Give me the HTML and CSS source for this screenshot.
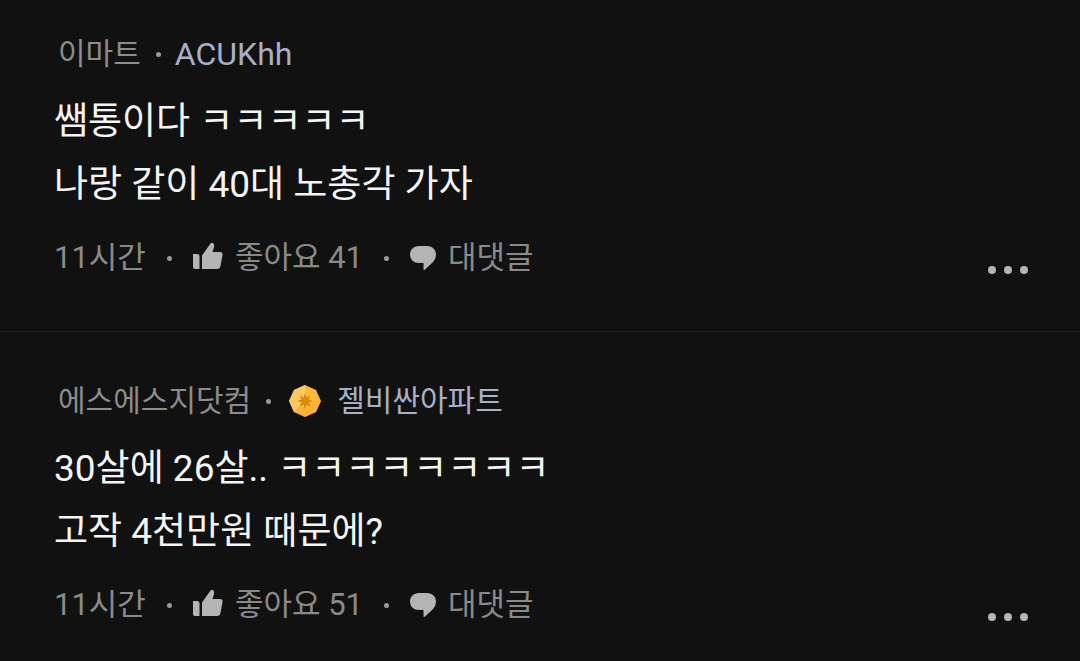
FILE: index.html
```html
<!DOCTYPE html>
<html lang="ko">
<head>
    <meta charset="UTF-8">
    <meta name="viewport" content="width=device-width, initial-scale=1.0">
    <title>댓글</title>
    <link rel="stylesheet" href="styles.css">
</head>
<body>
    <svg class="sprite" aria-hidden="true">
        <symbol id="icon-like" viewBox="0 0 30 28">
            <path d="M0 12h4q2.500 0 2.500 2.500V27H2q-2 0-2-2zM9 13.500 17.500 1.500Q19 0 20.500 1.500 21.500 3 21 5l-1.500 5H27q3 0 2.500 3l-2 11q-.5 3-3.500 3H9z"/>
        </symbol>
        <symbol id="icon-reply" viewBox="0 0 26 26">
            <path d="M9 1h8c5 0 9 3.500 9 8.500 0 4-2 7-5 9.500l-6 5.500q-1.500 1-1.500-.5V18H9c-5 0-9-3.500-9-8.500S4 1 9 1z"/>
        </symbol>
        <symbol id="icon-more" viewBox="0 0 40 8">
            <circle cx="4" cy="4" r="4"/>
            <circle cx="20" cy="4" r="4"/>
            <circle cx="36" cy="4" r="4"/>
        </symbol>
    </svg>
    <main class="comments">
        <article class="comment">
            <header class="comment-header">
                <a class="company" href="#">이마트</a>
                <span class="dot"></span>
                <a class="author latin" href="#">ACUKhh</a>
            </header>
            <p class="comment-body">쌤통이다 ㅋㅋㅋㅋㅋ<br>나랑 같이 40대 노총각 가자</p>
            <footer class="comment-footer">
                <div class="meta">
                    <span class="time">11시간</span>
                    <span class="dot"></span>
                    <button class="action like" type="button"><svg class="icon-like"><use href="#icon-like"/></svg>좋아요 41</button>
                    <span class="dot"></span>
                    <button class="action reply" type="button"><svg class="icon-reply"><use href="#icon-reply"/></svg>대댓글</button>
                </div>
                <button class="more" type="button" aria-label="더보기"><svg class="icon-more"><use href="#icon-more"/></svg></button>
            </footer>
        </article>
        <article class="comment">
            <header class="comment-header">
                <a class="company" href="#">에스에스지닷컴</a>
                <span class="dot"></span>
                <svg class="badge" viewBox="0 0 32 32" aria-hidden="true">
                    <path fill="#fbb83f" d="M16 0 27 5 32 16 27 27 16 32 5 27 0 16 5 5z"/>
                    <path fill="#fdc861" d="M16 0V16L5 27 0 16 5 5z"/>
                    <path fill="#f4a93a" d="M16 16 32 16 27 27 16 32 5 27z" opacity=".5"/>
                    <path fill="#d98a0c" d="M16 8l1.500 4.500 4-2-2 4L24 16l-4.500 1.500 2 4-4-2L16 24l-1.500-4.500-4 2 2-4L8 16l4.500-1.500-2-4 4 2z"/>
                </svg>
                <a class="author" href="#">젤비싼아파트</a>
            </header>
            <p class="comment-body">30살에 26살.. ㅋㅋㅋㅋㅋㅋㅋㅋ<br>고작 4천만원 때문에?</p>
            <footer class="comment-footer">
                <div class="meta">
                    <span class="time">11시간</span>
                    <span class="dot"></span>
                    <button class="action like" type="button"><svg class="icon-like"><use href="#icon-like"/></svg>좋아요 51</button>
                    <span class="dot"></span>
                    <button class="action reply" type="button"><svg class="icon-reply"><use href="#icon-reply"/></svg>대댓글</button>
                </div>
                <button class="more" type="button" aria-label="더보기"><svg class="icon-more"><use href="#icon-more"/></svg></button>
            </footer>
        </article>
    </main>
</body>
</html>
```
FILE: styles.css
```css
* {
    box-sizing: border-box;
}
body {
    margin: 0;
    background-color: #111;
    color: #f4f4f4;
    font-family: Roboto, "Noto Sans CJK KR", sans-serif;
}
.sprite {
    display: none;
}
.comment {
    padding: 34px 52px 39px 54px;
}
.comment + .comment {
    padding-top: 49px;
    border-top: 1px solid #1f1f1f;
}
.comment-header,
.meta {
    display: flex;
    align-items: center;
    line-height: 40px;
    color: #8a8a8a;
}
.comment-header {
    padding-left: 4px;
    font-size: 30px;
}
.comment-header a {
    text-decoration: none;
}
.comment-header .company {
    color: #8c8c8e;
}
.comment-header .author {
    color: #a9afc6;
}
.comment-header .latin {
    font-size: 32px;
}
.dot {
    width: 5px;
    height: 5px;
    border-radius: 50%;
    background-color: #9a9a9a;
}
.comment-header .dot {
    margin: 0 14px 0 15px;
}
.badge {
    width: 32px;
    height: 32px;
    margin: 0 16px 0 4px;
}
.comment-body {
    margin: 16px 0 22px;
    font-size: 37px;
    line-height: 63px;
}
.comment-footer {
    display: flex;
    align-items: flex-start;
    justify-content: space-between;
}
.meta {
    font-size: 31px;
}
.meta .dot {
    margin: 0 21px;
}
.action {
    display: flex;
    align-items: center;
    gap: 12px;
    padding: 0;
    border: none;
    background: none;
    color: inherit;
    font: inherit;
    cursor: pointer;
}
.action svg,
.more svg {
    fill: #b4b4b4;
}
.icon-like {
    width: 30px;
    height: 28px;
    margin-bottom: 4px;
}
.icon-reply {
    width: 26px;
    height: 26px;
}
.more {
    padding: 28px 0 18px;
    border: none;
    background: none;
    cursor: pointer;
}
.icon-more {
    display: block;
    width: 40px;
    height: 8px;
}
```
